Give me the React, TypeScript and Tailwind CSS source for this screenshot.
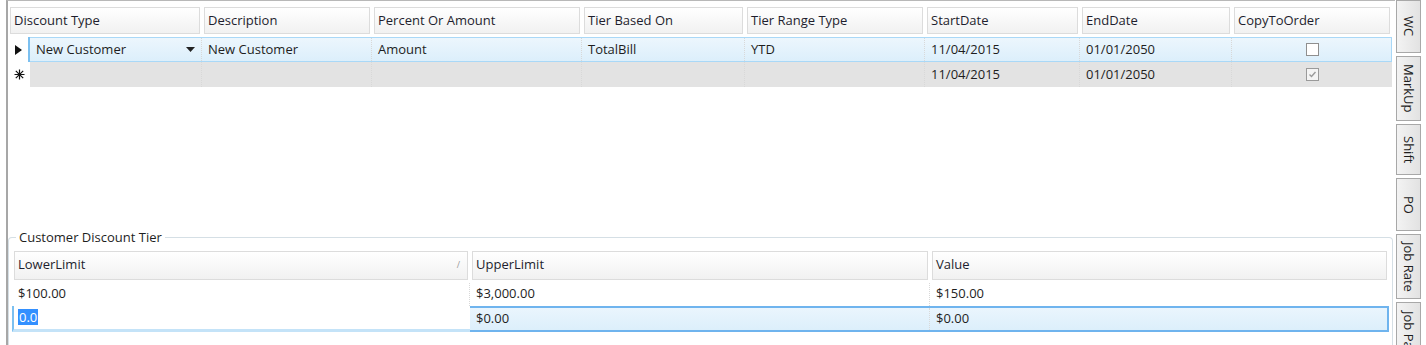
import React from 'react'

const font = "font-['Open_Sans','Noto_Sans',sans-serif]"

const HeaderCell = ({ children, sort }: { children?: React.ReactNode; sort?: boolean }) => (
  <div className="p-[2px] h-full">
    <div className="h-full flex items-center justify-between px-[3px] border border-[#dcdcdc] bg-gradient-to-b from-white to-[#f1f1f1] text-[13px] text-[#1e1e2e]">
      <span>{children}</span>
      {sort && <span className="text-[9px] text-[#999] pr-[4px]">/</span>}
    </div>
  </div>
)

const Cell = ({ children, className = '' }: { children?: React.ReactNode; className?: string }) => (
  <div className={`flex items-center px-[6px] text-[13px] text-[#1e1e1e] border-r border-dotted border-[#d8d8d8] ${className}`}>
    {children}
  </div>
)

const topCols = 'grid-cols-[22px_172px_170px_210px_163px_180px_155px_152px_160px]'

function Checkbox({ checked }: { checked?: boolean }) {
  return (
    <div className={`w-[13px] h-[13px] border ${checked ? 'border-[#9a9a9a] bg-[#f4f4f4]' : 'border-[#8f8f8f] bg-white'} flex items-center justify-center`}>
      {checked && (
        <svg width="9" height="9" viewBox="0 0 9 9">
          <path d="M1.5 4.5 L3.5 6.5 L7.5 2" stroke="#9a9a9a" strokeWidth="1.4" fill="none" />
        </svg>
      )}
    </div>
  )
}

function NewRowGlyph() {
  return (
    <svg width="11" height="11" viewBox="0 0 11 11" stroke="#111" strokeWidth="1.2">
      <path d="M5.5 0.5 V10.5 M0.5 5.5 H10.5 M1.8 1.8 L9.2 9.2 M9.2 1.8 L1.8 9.2" />
    </svg>
  )
}

function TopGrid() {
  return (
    <div className="h-[232px] flex flex-col">
      {/* header */}
      <div className="grid grid-cols-[194px_170px_210px_163px_180px_155px_152px_160px] h-[31px] mt-[3px]">
        <HeaderCell>Discount Type</HeaderCell>
        <HeaderCell>Description</HeaderCell>
        <HeaderCell>Percent Or Amount</HeaderCell>
        <HeaderCell>Tier Based On</HeaderCell>
        <HeaderCell>Tier Range Type</HeaderCell>
        <HeaderCell>StartDate</HeaderCell>
        <HeaderCell>EndDate</HeaderCell>
        <HeaderCell>CopyToOrder</HeaderCell>
      </div>
      {/* selected row */}
      <div className={`grid ${topCols} h-[25px] mt-[1px]`}>
        <div className="bg-white flex items-center justify-center border-r-2 border-[#7cc0f0]">
          <svg width="7" height="10" viewBox="0 0 7 10"><path d="M0 0 L7 5 L0 10 Z" fill="#111" /></svg>
        </div>
        <div className="col-span-8 grid grid-cols-[172px_170px_210px_163px_180px_155px_152px_160px] bg-gradient-to-b from-[#ecf6fd] to-[#dcefFB] border-y border-r border-[#a9d8f7]">
          <Cell className="justify-between pr-[6px]">
            <span>New Customer</span>
            <svg width="9" height="5" viewBox="0 0 9 5"><path d="M0 0 L9 0 L4.5 5 Z" fill="#222" /></svg>
          </Cell>
          <Cell>New Customer</Cell>
          <Cell>Amount</Cell>
          <Cell>TotalBill</Cell>
          <Cell>YTD</Cell>
          <Cell>11/04/2015</Cell>
          <Cell>01/01/2050</Cell>
          <Cell className="justify-center border-r-0"><Checkbox /></Cell>
        </div>
      </div>
      {/* new row */}
      <div className={`grid ${topCols} h-[25px]`}>
        <div className="bg-white flex items-center justify-center">
          <NewRowGlyph />
        </div>
        <div className="col-span-8 grid grid-cols-[172px_170px_210px_163px_180px_155px_152px_160px] bg-[#e3e3e3]">
          <Cell />
          <Cell />
          <Cell />
          <Cell />
          <Cell />
          <Cell>11/04/2015</Cell>
          <Cell>01/01/2050</Cell>
          <Cell className="justify-center border-r-0"><Checkbox checked /></Cell>
        </div>
      </div>
    </div>
  )
}

function TierGroup() {
  const cols = 'grid-cols-[458px_460px_1fr]'
  return (
    <div className="relative mt-[4px] h-[109px] border-l border-t border-r border-[#d5dfe5] rounded-t-[4px] mr-[2px]">
      <span className="absolute -top-[10px] left-[7px] bg-white px-[3px] text-[13px] text-[#1e1e1e] leading-[18px]">
        Customer Discount Tier
      </span>
      <div className="pt-[11px] px-[3px]">
        <div className={`grid ${cols} h-[33px]`}>
          <HeaderCell sort>LowerLimit</HeaderCell>
          <HeaderCell>UpperLimit</HeaderCell>
          <HeaderCell>Value</HeaderCell>
        </div>
        <div className={`grid ${cols} h-[23px] mt-[1px]`}>
          <Cell>$100.00</Cell>
          <Cell>$3,000.00</Cell>
          <Cell className="border-r-0">$150.00</Cell>
        </div>
        <div className={`grid ${cols} h-[26px]`}>
          <div className="flex items-center px-[4px] bg-white border-l-2 border-[#7cc0f0] border-b-[3px] border-b-[#c4e3f8] text-[13px]">
            <span className="bg-[#3390ff] text-white px-[1px] leading-[16px]">0.0</span>
          </div>
          <div className="col-span-2 grid grid-cols-[460px_1fr] bg-gradient-to-b from-[#eaf5fd] to-[#dcefFB] border-y-2 border-r-2 border-[#6fb4ee]">
            <Cell>$0.00</Cell>
            <Cell className="border-r-0">$0.00</Cell>
          </div>
        </div>
      </div>
    </div>
  )
}

const tabs: { label: string; h: string }[] = [
  { label: 'WC', h: 'h-[53px]' },
  { label: 'MarkUp', h: 'h-[65px]' },
  { label: 'Shift', h: 'h-[51px]' },
  { label: 'PO', h: 'h-[53px]' },
  { label: 'Job Rate', h: 'h-[65px]' },
  { label: 'Job Pay', h: 'h-[60px]' },
]

function TabStrip() {
  return (
    <div className="w-[31px] flex flex-col gap-[3px] pl-[1px] overflow-hidden">
      {tabs.map((t, i) => (
        <div
          key={t.label}
          className={`${t.h} w-[25px] shrink-0 border border-[#a8a8a8] bg-gradient-to-r from-[#f3f3f3] to-[#e2e2e2] flex justify-center ${i === tabs.length - 1 ? 'items-start pt-[8px]' : 'items-center'}`}
        >
          <span className="[writing-mode:vertical-rl] text-[13px] text-[#1e1e1e] leading-none">{t.label}</span>
        </div>
      ))}
    </div>
  )
}

export default function App() {
  return (
    <div className={`w-[1426px] h-[345px] bg-white flex overflow-hidden ${font}`}>
      <div className="w-[6px] shrink-0" />
      <div className="w-[1390px] border-l-2 border-t border-l-[#a7a7a7] border-t-[#b8b8b8] flex flex-col pt-[1px]">
        <TopGrid />
        <TierGroup />
      </div>
      <TabStrip />
    </div>
  )
}
